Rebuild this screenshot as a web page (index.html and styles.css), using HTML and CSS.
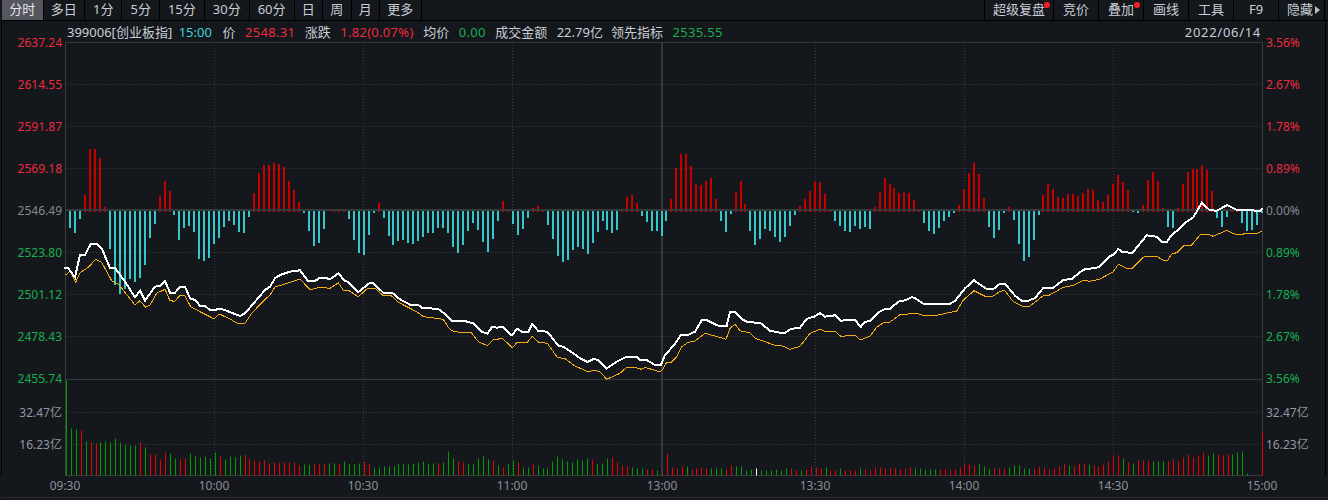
FILE: index.html
```html
<!DOCTYPE html>
<html lang="zh-CN">

<head>
    <meta charset="UTF-8">
    <meta name="viewport" content="width=device-width, initial-scale=1.0">
    <title>399006 分时</title>
    <link rel="stylesheet" href="styles.css">
</head>

<body>
    <div class="terminal">
        <div class="toolbar">
            <div class="toolbar__group">
                <span class="tab tab--active">分时</span>
                <span class="tab">多日</span>
                <span class="tab tab--num">1分</span>
                <span class="tab tab--num">5分</span>
                <span class="tab tab--num">15分</span>
                <span class="tab tab--num">30分</span>
                <span class="tab tab--num">60分</span>
                <span class="tab">日</span>
                <span class="tab">周</span>
                <span class="tab">月</span>
                <span class="tab">更多</span>
            </div>
            <div class="toolbar__group">
                <span class="tool tool--first">超级复盘<i class="dot"></i></span>
                <span class="tool">竞价</span>
                <span class="tool">叠加<i class="dot"></i></span>
                <span class="tool">画线</span>
                <span class="tool">工具</span>
                <span class="tool">F9</span>
                <span class="tool tool--hide">隐藏<i class="arrow"></i></span>
            </div>
        </div>

        <div class="board">
            <div class="axis axis--left">
                <span class="up">2637.24</span>
                <span class="up">2614.55</span>
                <span class="up">2591.87</span>
                <span class="up">2569.18</span>
                <span class="flat">2546.49</span>
                <span class="down">2523.80</span>
                <span class="down">2501.12</span>
                <span class="down">2478.43</span>
                <span class="down">2455.74</span>
                <span class="vol">32.47亿</span>
                <span class="vol">16.23亿</span>
            </div>

            <div class="board__center">
                <div class="quote">
                    <span>399006[创业板指]</span>
                    <span class="teal quote__time">15:00</span>
                    <span class="quote__price">价</span>
                    <span class="up">2548.31</span>
                    <span>涨跌</span>
                    <span class="up">1.82(0.07%)</span>
                    <span>均价</span>
                    <span class="down">0.00</span>
                    <span>成交金额</span>
                    <span>22.79亿</span>
                    <span class="quote__lead">领先指标</span>
                    <span class="down">2535.55</span>
                    <span class="quote__date">2022/06/14</span>
                </div>
                <svg id="chart" class="chart" width="1198" height="434" viewBox="65 42 1198 434"></svg>
            </div>

            <div class="axis axis--right">
                <span class="up">3.56%</span>
                <span class="up">2.67%</span>
                <span class="up">1.78%</span>
                <span class="up">0.89%</span>
                <span class="flat">0.00%</span>
                <span class="down">0.89%</span>
                <span class="down">1.78%</span>
                <span class="down">2.67%</span>
                <span class="down">3.56%</span>
                <span class="vol">32.47亿</span>
                <span class="vol">16.23亿</span>
            </div>
        </div>

        <div id="times" class="times"></div>
    </div>

    <script src="chart.js"></script>
</body>

</html>
```

FILE: styles.css
```css
* {
    box-sizing: border-box;
}

body {
    margin: 0;
    background-color: #14171c;
    color: #c9ced6;
    font-family: "Noto Sans", "Noto Sans CJK SC", sans-serif;
    overflow: hidden;
}

.terminal {
    width: 1328px;
    height: 500px;
    padding-left: 1px;
}

.toolbar {
    height: 21px;
    display: flex;
    justify-content: space-between;
    padding-left: 1px;
    padding-right: 3px;
    border-bottom: 1px solid #000;
    font-size: 13px;
    line-height: 19px;
}

.toolbar__group {
    display: flex;
}

.tab {
    padding: 0 7.25px;
    border-right: 1px solid #000;
    white-space: nowrap;
}

.tab--num {
    padding: 0 8px;
}

.tab--active {
    background-color: #55565f;
    color: #e6e6e6;
}

.tool {
    position: relative;
    width: 45px;
    text-align: center;
    border-right: 1px solid #000;
}

.tool--first {
    width: 70px;
    border-left: 1px solid #000;
}

.tool--hide {
    width: 46px;
    text-align: left;
    padding-left: 8px;
}

.dot {
    position: absolute;
    top: 2px;
    right: 3px;
    width: 6px;
    height: 6px;
    border-radius: 50%;
    background-color: #f3202c;
}

.arrow {
    position: absolute;
    top: 6px;
    right: 4px;
    border-left: 5px solid #b9bec5;
    border-top: 4px solid transparent;
    border-bottom: 4px solid transparent;
}

.board {
    display: flex;
    margin-right: 2px;
    border-left: 1px solid #000;
    border-right: 1px solid #000;
}

.board__center {
    width: 1198px;
}

.axis {
    padding-top: 1px;
    font-size: 12px;
    display: flex;
    flex-direction: column;
}

.axis span {
    height: 42px;
    line-height: 42px;
    white-space: nowrap;
}

.axis span.vol {
    height: 32px;
    line-height: 32px;
}

.axis .vol:nth-child(10) {
    margin-top: -3.5px;
}

.axis--left {
    width: 63px;
    padding-right: 3px;
    text-align: right;
}

.axis--right {
    flex: 1;
    padding-left: 3px;
}

.quote {
    height: 21px;
    display: flex;
    align-items: center;
    gap: 9.5px;
    padding-left: 2px;
    font-size: 13px;
}

.quote .up,
.quote .down {
    letter-spacing: 0.3px;
}

.quote__time {
    margin-left: -3px;
}

.quote__price {
    margin-left: 1px;
}

.quote__lead {
    margin-left: -1.5px;
}

.quote__date {
    margin-left: auto;
    padding-right: 2px;
    letter-spacing: 0.7px;
}

.chart {
    display: block;
    overflow: visible;
}

.up {
    color: #ee2a3e;
}

.down {
    color: #18b04e;
}

.flat {
    color: #85888d;
}

.vol {
    color: #9298a0;
}

.teal {
    color: #3fd5d8;
}

.times {
    position: relative;
    height: 22px;
    border-bottom: 1px solid #2b2d31;
    font-size: 12px;
    line-height: 19px;
    color: #8a9098;
}

.times span {
    position: absolute;
    top: 0;
    transform: translateX(-50%);
}
```

FILE: chart.js
```js
// volume values: positive is a red bar, negative a green one
const macdAm = [-17, -22, -8, 17, 63, 63, 54, 5, -38, -74, -83, -78, -68, -71, -67, -54, -27, -13, 16, 31, 21, -4, -29, -17, -15, -21, -48, -50, -47, -33, -27, -16, -10, -14, -21, -22, -6, 19, 39, 47, 47, 49, 48, 45, 31, 22, 10, -2, -20, -35, -32, -18, 0, 1, 3, 2, -8, -29, -42, -44, -24, -2, 9, -7, -25, -34, -30, -29, -32, -33, -30, -26, -22, -22, -17, -17, -22, -36, -42, -34, -20, -12, -19, -31, -41, -28, -10, 11, 2, -13, -24, -18, -7, 4, 6, 3, -14, -28, -45, -51, -49, -39, -36, -38, -43, -32, -21, -10, -19, -22, -19, 3, 15, 17, 9, -5, -11, -20, -20, -25];

const macdPm = [-10, 13, 44, 58, 58, 46, 28, 27, 31, 34, 13, -10, -21, -3, 20, 31, 8, -20, -34, -28, -18, -20, -26, -31, -26, -15, -4, 6, 13, 21, 30, 30, 18, 3, -10, -15, -20, -21, -15, -18, -16, -18, 5, 20, 34, 28, 24, 19, 20, 19, 12, 2, -12, -20, -23, -17, -10, -6, -2, 7, 23, 39, 49, 38, 14, -16, -27, -19, -2, 5, -9, -33, -50, -46, -29, -4, 17, 28, 23, 15, 14, 18, 18, 16, 19, 23, 22, 12, 10, 17, 28, 37, 30, 22, -1, -2, 7, 32, 40, 31, 4, -16, -17, 4, 28, 40, 43, 43, 47, 42, 21, -7, -16, -6, 3, 1, -12, -20, -19, -14, -2];

const volAm = [-95, -47, -46, 45, -34, 33, 32, -33, -34, -33, -37, -33, -31, -30, -30, 33, -28, 21, 21, 16, 23, -22, -17, 16, 17, -22, -19, -18, -19, -17, -23, 19, -16, -19, -18, -20, 20, 17, 15, 14, 15, 12, 13, 13, 13, 13, 13, 10, -11, -11, 12, 11, 12, -12, -12, 11, -14, -11, -11, -12, 14, 12, -8, -8, -9, -9, -9, -12, -11, -11, -12, -13, -14, -12, -12, 12, -13, -24, -17, 14, 13, -11, -11, -17, -19, -16, 15, -10, 8, -11, -15, 13, -8, -8, 11, -10, -7, -7, -14, -19, -16, -14, -13, -16, -15, -17, 16, -11, -12, -17, 18, 13, 10, 9, -8, -7, -7, 6, 6, -5, -1];

const volPm = [22, 8, 7, 9, -9, 6, 7, 8, 7, -7, -7, -7, 6, 10, -9, -9, -5, -6, 7, -5, -5, -5, -6, -5, -7, 7, 5, -5, 6, 9, 8, 7, -8, 5, 5, -7, 5, 5, 5, -7, 6, 5, 8, 8, 7, 7, 7, 6, 7, 8, -7, -7, -6, -6, -6, 6, 6, 6, 6, 8, 12, 11, 10, -11, -9, -7, 7, 7, 7, -8, -10, -10, -7, -7, 7, 9, 8, 6, 7, 9, 12, -10, 9, 12, 12, -11, 10, 9, 11, 14, 20, 20, -17, 13, -12, 15, 15, 15, -14, -14, -14, 14, 16, 14, 18, 21, 18, 20, 23, -20, -22, 21, 20, 21, -21, -23, -24, -2, 0, 0, 43];

const pricePoints = [[64.3, 268.3], [68.3, 268.3], [75, 277.3], [80, 255], [85, 255], [90.7, 244], [97.3, 244], [101.7, 248.3], [110, 268], [115, 268], [125, 281.7], [135, 297.3], [140, 290.7], [145, 300.7], [155, 286.7], [160, 286], [165, 281], [170, 292.7], [175, 292.7], [180, 286.7], [185, 286.7], [190, 298.3], [195, 300], [200, 305.7], [205, 306], [210, 310], [214.3, 310], [220, 308.7], [225, 310], [233, 313.3], [240, 316], [245, 313.3], [255, 301.7], [265, 290], [270, 286.7], [275, 278.3], [280, 275], [290, 271.7], [300, 270.3], [308, 281], [315, 281], [320, 277.7], [325, 277.7], [330, 279.3], [338.3, 273.3], [345, 281], [348.3, 282], [358.3, 292], [369.3, 283.3], [373.3, 283.3], [383.3, 292.7], [392.7, 293.3], [400, 299.3], [410, 304.7], [418.3, 305], [421.7, 307.7], [438.3, 309], [443.3, 312.7], [451.7, 320.7], [463.3, 320.7], [473.3, 323.3], [481.7, 331.7], [487.3, 333.7], [492.3, 326.7], [496.7, 327.7], [502.3, 326.7], [511.7, 335.3], [517.3, 328.7], [521.7, 331.7], [528.3, 331.7], [532.3, 324], [538.3, 331], [547.3, 331.7], [558.3, 345.7], [563.3, 346.7], [573.3, 353.3], [580, 358.3], [587.3, 362], [593.3, 359], [598.3, 360], [606.7, 368.3], [616.7, 361.7], [626.7, 356.7], [636.7, 357], [640, 359.7], [646.7, 360], [655, 365], [661, 365], [665, 355], [675, 344], [680.7, 335], [688.3, 334.7], [695, 331.7], [701.7, 320.3], [706.7, 320], [711.7, 322.7], [718.3, 325.7], [726.7, 325.7], [730, 312.3], [735, 311.7], [741.7, 319], [748.3, 322.3], [760, 322.7], [770, 330.7], [780, 332.7], [785, 333], [790.7, 329], [800, 327.7], [806.7, 319], [815, 316.3], [820, 313], [825, 316.7], [835, 315.3], [840.7, 320.7], [855, 319.7], [860.7, 327], [865, 321.7], [870, 321.3], [878.3, 312.3], [885, 309], [890, 308.7], [898.3, 301.7], [905, 300.3], [911.7, 297.3], [915, 298], [923.3, 303.7], [950, 303.7], [955, 301], [965, 288.3], [974, 280.3], [986.7, 289], [993.3, 289], [1000, 283.7], [1005, 283.7], [1015, 295.7], [1021.7, 300.7], [1028.3, 300.7], [1035, 298], [1043.3, 288], [1053.3, 287.7], [1063.3, 280], [1071.7, 279], [1083.3, 269.7], [1098.3, 267.3], [1110, 256], [1113.3, 255], [1118.3, 249], [1121.7, 251.7], [1132.3, 253], [1146.7, 235.3], [1156.7, 236.7], [1161.7, 241.7], [1166.7, 242], [1171.7, 235], [1180, 228.3], [1185, 222.7], [1193.3, 217.3], [1201.7, 203], [1210, 210.3], [1216.7, 210.7], [1227.3, 205], [1236.7, 210], [1260, 210.7], [1262.7, 208.3]];

const avgPoints = [[65.7, 275], [70, 271], [75.7, 282.3], [80, 272.7], [88.3, 267.3], [95.7, 259.3], [101.7, 262.3], [111.7, 280.7], [118.3, 284], [135, 305], [140, 300.7], [145.7, 307.3], [150, 305], [156.7, 293.3], [165, 289.3], [170, 300.7], [175, 301.3], [180, 295.3], [185, 296], [190.7, 306.7], [200, 311.7], [214.3, 319], [219.3, 314], [230, 319], [238.3, 324], [245, 323.3], [251.7, 313.3], [265, 299.3], [270, 295.3], [275, 286.7], [283.3, 284.7], [300, 279], [310, 289.7], [320, 287.3], [330, 288.3], [338.3, 282.7], [343.3, 290.3], [348.3, 290.3], [358.3, 296.7], [366.7, 289], [375, 288.3], [383.3, 295.7], [391.7, 296], [398.3, 302.3], [416.7, 311.7], [423.3, 316.7], [436.7, 318.3], [443.3, 319.3], [449.3, 328.7], [454, 331.7], [471.7, 333], [478.3, 341.7], [487.3, 345.7], [493.3, 340], [502.3, 338.3], [512.3, 347.7], [517.3, 342.3], [527.3, 342.3], [532.3, 336.3], [538.3, 342], [547.3, 343.3], [557.3, 357.3], [565, 358.7], [575, 366], [588.3, 372], [593.3, 370.3], [600, 371.7], [606.7, 379.3], [620, 373.3], [626.7, 367.3], [636.7, 368], [641.7, 369.3], [645, 367.3], [660, 372], [662.7, 369.3], [666.7, 362.3], [671.7, 362], [676.7, 356.7], [681.7, 346.7], [688.3, 342.3], [695, 341], [705, 333.3], [715, 336], [726, 339.3], [730, 328.3], [735, 324.3], [740, 330.7], [750, 333], [755, 338.3], [775, 345.3], [781.7, 345.7], [790, 349.3], [800, 346.3], [810, 333.3], [820, 329.3], [825, 331.3], [835, 331.3], [840.7, 336.3], [855, 335.3], [860, 340], [870, 336.3], [876.7, 327.3], [883.3, 322.7], [890, 322], [900, 314.7], [916.7, 313.3], [923.3, 315.3], [936.7, 315.3], [956.7, 311], [963.3, 300], [974, 290.7], [985, 296.3], [993.3, 296], [1000, 291.3], [1005, 290.7], [1013.3, 301.7], [1021.7, 306], [1030, 306], [1043.3, 295.7], [1048.3, 295.7], [1063.3, 287.3], [1073.3, 285.3], [1083.3, 280.3], [1090, 281.3], [1100, 279], [1113.3, 271.7], [1118.3, 264.3], [1126.7, 268.3], [1132.3, 268.3], [1143.3, 257.3], [1146.7, 256.3], [1156.7, 256.3], [1163.3, 260.3], [1167.7, 260.3], [1171.7, 254], [1176.7, 252.7], [1183.3, 246], [1191.7, 245], [1200, 235], [1208.3, 234.3], [1213.3, 236.3], [1226.7, 230.3], [1233.3, 233.7], [1240, 234.7], [1245, 233.7], [1256.7, 233.7], [1261.7, 231.3]];

const ticks = [['09:30', 65], ['10:00', 214], ['10:30', 363], ['11:00', 512], ['13:00', 662], ['13:30', 815], ['14:00', 964], ['14:30', 1113], ['15:00', 1262]];

const chart = document.getElementById('chart');
const PLOT_LEFT = 65.5;
const PLOT_RIGHT = 1262.5;
const ZERO_Y = 210;
const VOL_Y = 475.5;
// the one flat minute in the afternoon, drawn white
const FLAT_MINUTE = 18;

const draw = (tag, attrs) => {
    const el = document.createElementNS('http://www.w3.org/2000/svg', tag);
    Object.keys(attrs).forEach(key => el.setAttribute(key, attrs[key]));
    chart.appendChild(el);
    return el;
};

const hLine = (y, color, dash) => draw('line', {
    x1: PLOT_LEFT, x2: PLOT_RIGHT, y1: y, y2: y, stroke: color, 'stroke-dasharray': dash || 'none'
});

const vLine = (x, color, dash, width) => draw('line', {
    x1: x, x2: x, y1: 42, y2: VOL_Y, stroke: color, 'stroke-dasharray': dash || 'none', 'stroke-width': width || 1
});

// grid
[84.5, 126.5, 168.5, 252.5, 294.5, 336.5, 412.5, 444.5].forEach(y => hLine(y, '#383a3e', '1 2'));
[214.5, 363.5, 512.5, 815.5, 964.5, 1113.5].forEach(x => vLine(x, '#383a3e', '1 2'));
[42.5, 379.5, VOL_Y].forEach(y => hLine(y, '#36383c'));
vLine(PLOT_LEFT, '#3a3c40');
vLine(PLOT_RIGHT, '#3a3c40');
vLine(662, '#36383c', null, 2);

// bars around the zero line
const macdBar = (x, value) => {
    const left = Math.round(x) - 1;
    if (value > 0) {
        draw('rect', { x: left, y: ZERO_Y + 2 - value, width: 2, height: value, fill: '#c80000' });
    } else if (value < 0) {
        draw('rect', { x: left, y: ZERO_Y + 1, width: 2, height: -value, fill: '#37c6ca' });
    }
};

macdAm.forEach((value, i) => macdBar(65 + 4.977 * (i + 1), value));
macdPm.forEach((value, i) => macdBar(666 + 4.967 * i, value));
draw('rect', { x: PLOT_LEFT, y: ZERO_Y - 1, width: PLOT_RIGHT - PLOT_LEFT, height: 2, fill: '#36383c' });

// volume
const volBar = (x, value, color) => {
    const left = Math.round(x);
    draw('rect', { x: left, y: VOL_Y - Math.abs(value), width: 1, height: Math.abs(value), fill: color });
};

volAm.forEach((value, i) => volBar(65.7 + 4.967 * i, value, value > 0 ? '#ea0000' : '#009c00'));
volPm.forEach((value, i) => {
    const color = i === FLAT_MINUTE ? '#ffffff' : value > 0 ? '#ea0000' : '#009c00';
    volBar(666.7 + 4.963 * i, value, color);
});

// lines
const trend = (points, color, width) => draw('polyline', {
    points: points.map(p => p.join(',')).join(' '),
    fill: 'none',
    stroke: color,
    'stroke-width': width,
    'shape-rendering': 'crispEdges'
});

trend(avgPoints, '#f5ac12', 1);
trend(pricePoints, '#ffffff', 2);

// time labels
const times = document.getElementById('times');
ticks.forEach(tick => {
    const label = document.createElement('span');
    label.textContent = tick[0];
    label.style.left = (tick[1] - 1) + 'px';
    times.appendChild(label);
});
```
